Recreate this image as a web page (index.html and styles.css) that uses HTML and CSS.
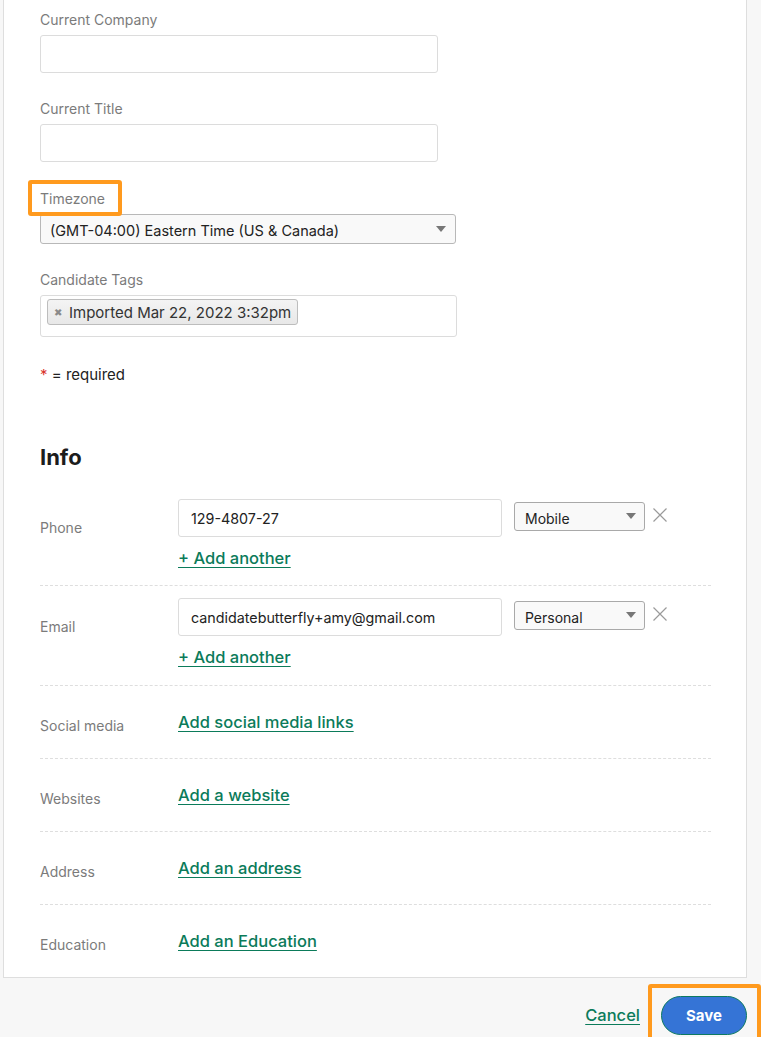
FILE: index.html
```html
<!DOCTYPE html>
<html lang="en">
<head>
<meta charset="utf-8">
<title>Edit candidate</title>
<link rel="stylesheet" href="styles.css">
</head>
<body>
<div class="page">
  <div class="card">
    <div class="field">
      <label class="label">Current Company</label>
      <div class="input tall"></div>
    </div>
    <div class="field">
      <label class="label">Current Title</label>
      <div class="input tall"></div>
    </div>
    <div class="field">
      <label class="label highlighted">Timezone</label>
      <div class="select tz"><span>(GMT-04:00) Eastern Time (US &amp; Canada)</span><span class="caret"></span></div>
    </div>
    <div class="field">
      <label class="label">Candidate Tags</label>
      <div class="tags">
        <span class="chip"><span class="chip-x">&#10006;</span>Imported Mar 22, 2022 3:32pm</span>
      </div>
    </div>
    <p class="required"><span class="star">*</span> = required</p>

    <h2 class="section-title">Info</h2>

    <div class="info-row multi first">
      <div class="info-label">Phone</div>
      <div class="info-body">
        <div class="entry">
          <div class="input value wide">129-4807-27</div>
          <div class="select type"><span>Mobile</span><span class="caret"></span></div>
          <svg class="remove" width="16" height="16" viewBox="0 0 16 16"><path d="M1.5 1.5 L14.5 14.5 M14.5 1.5 L1.5 14.5" stroke="#9a9a9a" stroke-width="1.2" fill="none"/></svg>
        </div>
        <a class="link add" href="#">+ Add another</a>
      </div>
    </div>

    <div class="info-row multi">
      <div class="info-label">Email</div>
      <div class="info-body">
        <div class="entry">
          <div class="input value wide">candidatebutterfly+amy@gmail.com</div>
          <div class="select type"><span>Personal</span><span class="caret"></span></div>
          <svg class="remove" width="16" height="16" viewBox="0 0 16 16"><path d="M1.5 1.5 L14.5 14.5 M14.5 1.5 L1.5 14.5" stroke="#9a9a9a" stroke-width="1.2" fill="none"/></svg>
        </div>
        <a class="link add" href="#">+ Add another</a>
      </div>
    </div>

    <div class="info-row single">
      <div class="info-label">Social media</div>
      <div class="info-body"><a class="link" href="#">Add social media links</a></div>
    </div>
    <div class="info-row single">
      <div class="info-label">Websites</div>
      <div class="info-body"><a class="link" href="#">Add a website</a></div>
    </div>
    <div class="info-row single">
      <div class="info-label">Address</div>
      <div class="info-body"><a class="link" href="#">Add an address</a></div>
    </div>
    <div class="info-row single last">
      <div class="info-label">Education</div>
      <div class="info-body"><a class="link" href="#">Add an Education</a></div>
    </div>
  </div>

  <div class="footer">
    <a class="link cancel" href="#">Cancel</a>
    <div class="save-highlight">
      <button class="save" type="button">Save</button>
    </div>
  </div>
</div>
</body>
</html>
```

FILE: styles.css
```css
*, *::before, *::after { box-sizing: border-box; }

html, body {
  margin: 0;
  padding: 0;
  background: #ffffff;
  font-family: Inter, "Noto Sans", "Liberation Sans", sans-serif;
  color: #222;
}

.page {
  width: 761px;
  background: #f7f7f7;
}

.card {
  margin: 0 14px 0 3px;
  background: #fff;
  border: 1px solid #dedede;
  border-top: none;
  padding: 10px 0 0 36px;
  height: 978px;
}

.field {
  margin-bottom: 26px;
}

.label {
  display: block;
  font-size: 14px;
  line-height: 20px;
  color: #7b7b7b;
  margin-bottom: 5px;
}

.highlighted {
  position: relative;
  display: inline-block;
}

.highlighted::after {
  content: "";
  position: absolute;
  left: -12px;
  top: -9px;
  width: 94px;
  height: 36px;
  border: 4px solid #ff9a1e;
  border-radius: 3px;
}

.input {
  width: 398px;
  height: 38px;
  border: 1px solid #dcdcdc;
  border-radius: 3px;
  background: #fff;
}

.select {
  display: flex;
  align-items: center;
  justify-content: space-between;
  background: #f9f9f9;
  border: 1px solid #a9a9a9;
  border-radius: 3px;
  font-size: 14px;
  color: #222;
}

.select.tz {
  width: 416px;
  height: 30px;
  padding: 3px 9px 0 9px;
  font-size: 14.5px;
  border-color: #b8b8b8;
}

.select.tz .caret { margin-top: -4px; }

.caret {
  width: 0;
  height: 0;
  border-left: 5px solid transparent;
  border-right: 5px solid transparent;
  border-top: 6px solid #777;
}

.tags {
  width: 417px;
  height: 42px;
  border: 1px solid #dcdcdc;
  border-radius: 3px;
  padding: 3px 6px;
}

.chip {
  display: inline-flex;
  align-items: center;
  height: 26px;
  padding: 0 6px 0 6px;
  background: linear-gradient(#f4f4f4, #e8e8e8);
  border: 1px solid #bdbdbd;
  border-radius: 3px;
  font-size: 15px;
  color: #333;
}

.chip-x {
  font-size: 10px;
  color: #8a8a8a;
  margin-right: 7px;
}

.required {
  margin: 0;
  padding-top: 2px;
  font-size: 15px;
  line-height: 20px;
  color: #222;
}

.star { color: #d9342b; }

.section-title {
  margin: 58px 0 28px 0;
  font-size: 22px;
  line-height: 28px;
  font-weight: 700;
  color: #1c1c1c;
}

.info-row {
  display: flex;
  width: 671px;
  border-bottom: 1px dashed #dedede;
}

.info-row.last { border-bottom: none; }

.info-row.multi {
  padding: 12px 0 18px 0;
}

.info-row.multi.first {
  padding-top: 0;
  padding-bottom: 17px;
}

.info-label {
  width: 138px;
  flex: none;
  font-size: 14px;
  line-height: 20px;
  color: #7b7b7b;
}

.multi .info-label { padding-top: 19px; }

.single {
  padding: 26px 0 22px 0;
}

.single .info-label { padding-top: 4px; }

.info-body {
  display: flex;
  flex-direction: column;
  align-items: flex-start;
}

.entry {
  display: flex;
  align-items: flex-start;
}

.input.value {
  width: 324px;
  padding: 0 12px;
  display: flex;
  align-items: center;
  font-size: 14.3px;
  color: #222;
}

.select.type {
  width: 131px;
  height: 29px;
  margin: 3px 0 0 12px;
  padding: 4px 8px 0 10px;
}

.select.type .caret { margin-top: -5px; }

.remove {
  margin: 8px 0 0 7px;
}

.link {
  font-size: 16.5px;
  font-weight: 500;
  line-height: 20px;
  color: #0b7b5a;
  text-decoration: underline;
  text-underline-offset: 3px;
  text-decoration-thickness: 1px;
}

.link.add {
  margin-top: 11px;
}

.footer {
  height: 59px;
  display: flex;
  justify-content: flex-end;
  align-items: flex-start;
  padding-top: 6px;
}

.cancel {
  margin: 21px 8px 0 0;
}

.save-highlight {
  width: 113px;
  height: 62px;
  flex: none;
  border: 4px solid #ff9a1e;
  border-radius: 3px;
  padding: 8px 10px 0 9px;
}

.save {
  display: block;
  width: 86px;
  height: 39px;
  border-radius: 20px;
  background: #3574d6;
  border: 1px solid #0d7a61;
  color: #fff;
  font-family: Inter, "Liberation Sans", sans-serif;
  font-size: 15px;
  font-weight: 700;
}
```
